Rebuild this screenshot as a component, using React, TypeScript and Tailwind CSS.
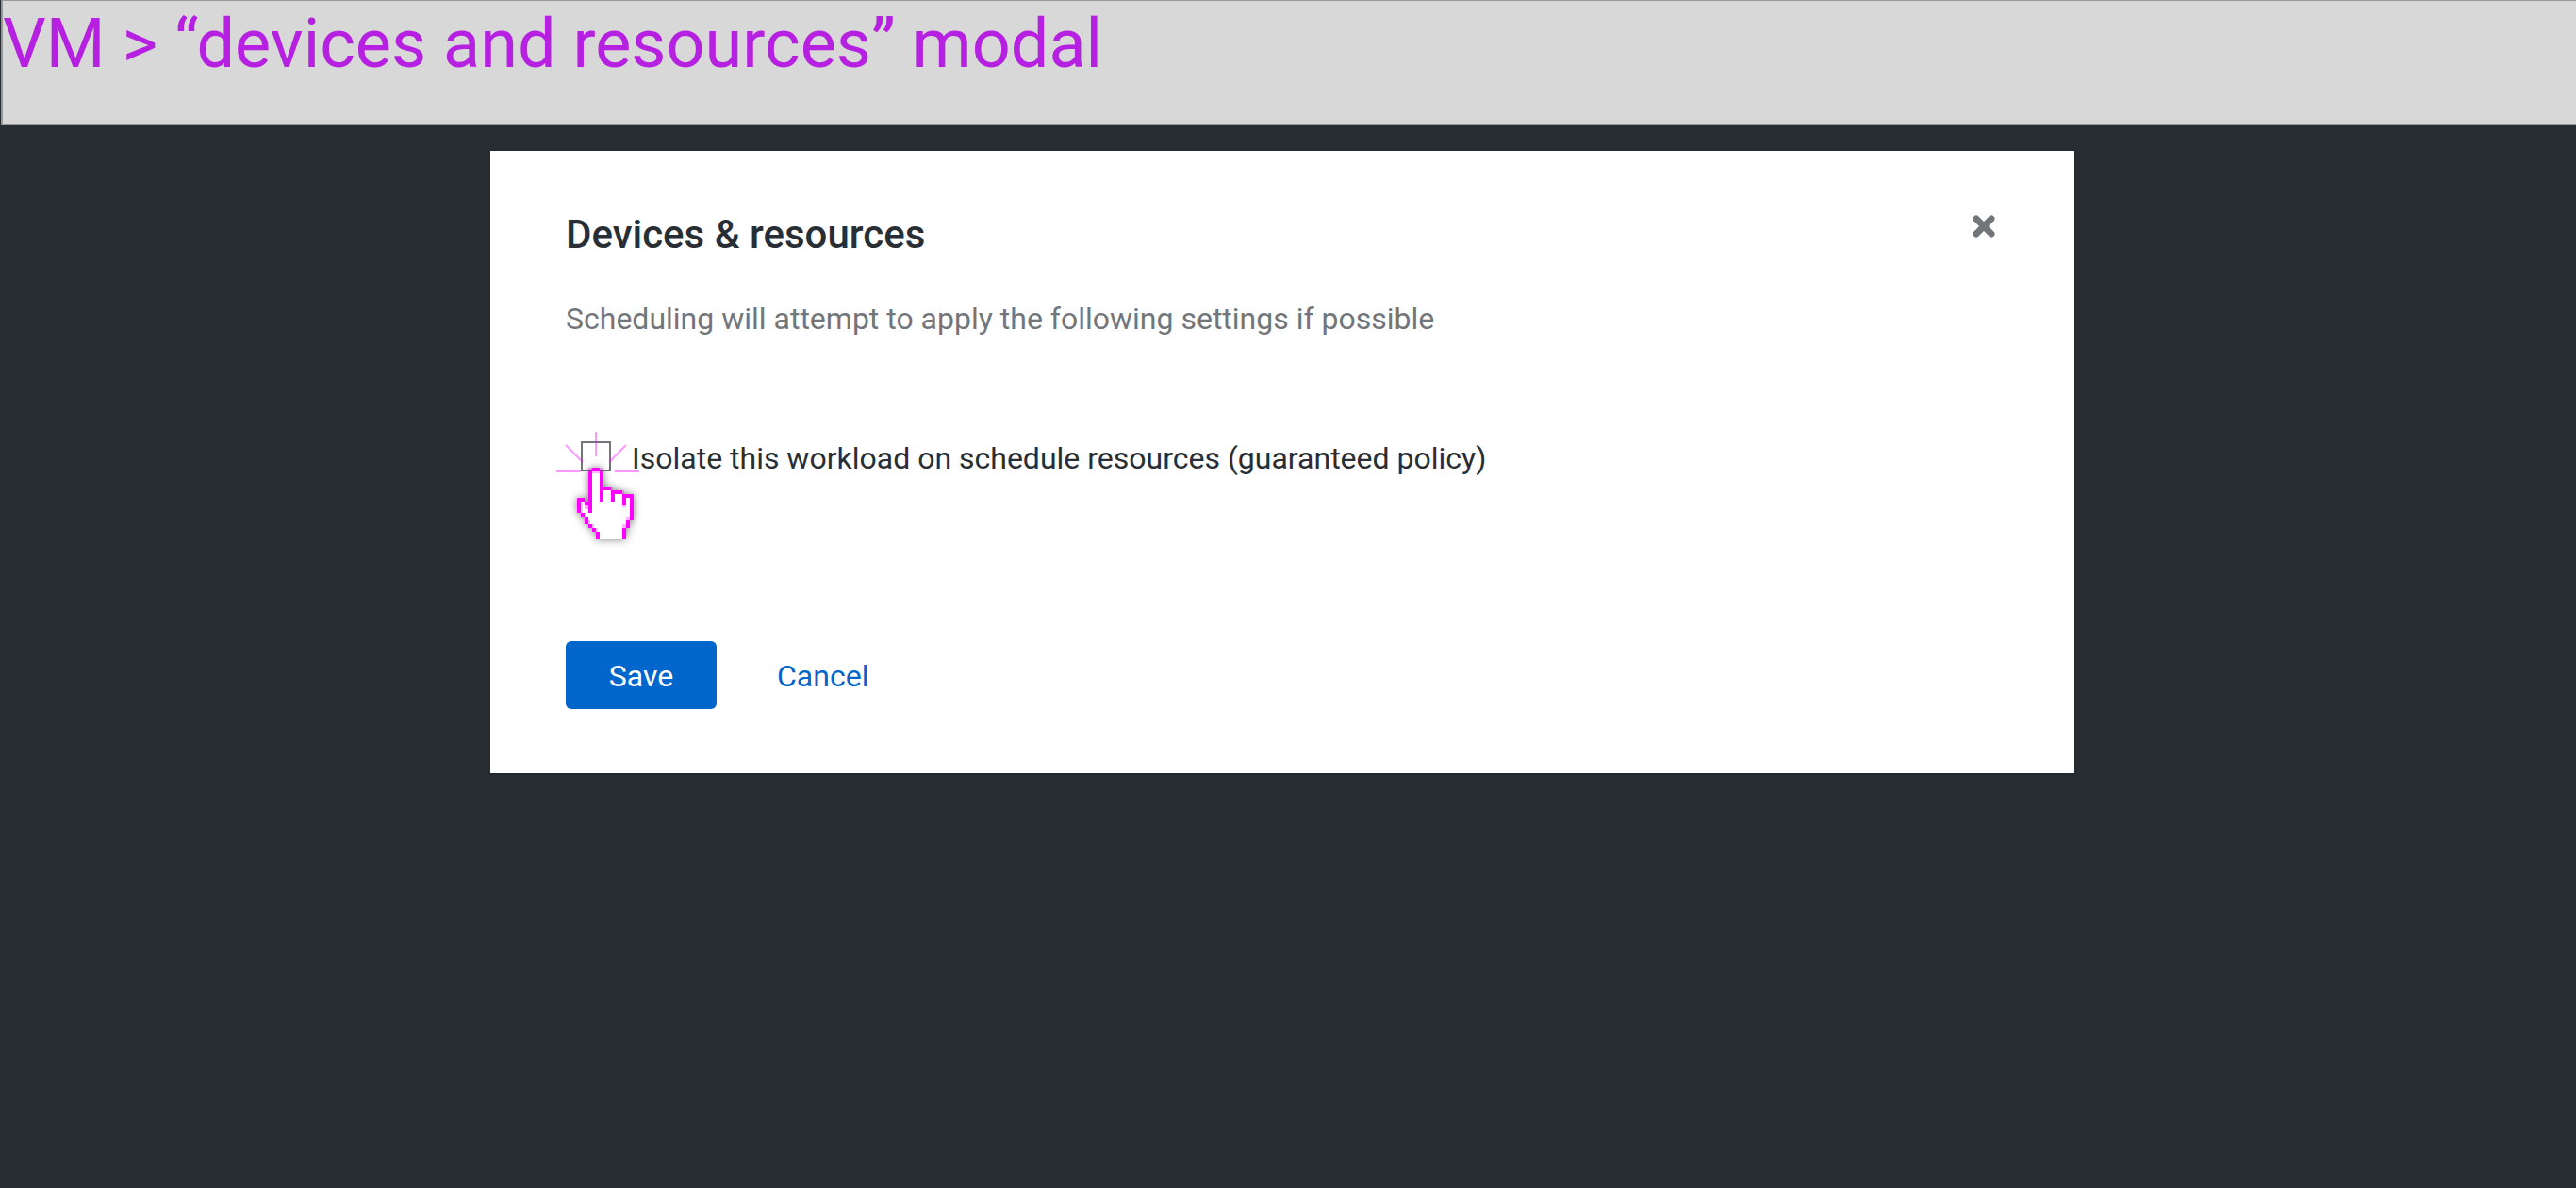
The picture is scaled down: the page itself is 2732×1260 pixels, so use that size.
import React from "react";

const handCells: [number, number, number, number][] = [
  [4, 0, 2, 1],
  [3, 1, 1, 11],
  [6, 1, 1, 8],
  [7, 5, 2, 1],
  [9, 6, 1, 3],
  [10, 6, 2, 1],
  [12, 7, 1, 3],
  [13, 7, 2, 1],
  [14, 7, 1, 7],
  [13, 14, 1, 2],
  [12, 16, 1, 3],
  [0, 8, 2, 1],
  [0, 8, 1, 4],
  [2, 9, 1, 1],
  [1, 12, 1, 1],
  [2, 13, 1, 2],
  [3, 15, 1, 1],
  [4, 16, 1, 1],
  [5, 17, 1, 2],
];

const softCells: [number, number, number, number][] = [
  [3, 0, 1, 1],
  [6, 0, 1, 1],
  [4, 1, 2, 0.5],
  [9, 5, 0.5, 1],
  [12, 6, 0.5, 1],
  [12, 10, 1, 0.5],
  [1, 9, 0.5, 3],
  [2, 8, 0.5, 1],
  [2, 10, 1, 1],
  [2, 12, 0.5, 1],
  [3, 14, 0.5, 1],
  [4, 15, 0.5, 1],
  [5, 16, 0.5, 1],
  [13, 13, 1, 1],
  [12, 15, 1, 1],
];

function ClickMarker() {
  return (
    <svg
      aria-hidden="true"
      className="pointer-events-none absolute -left-[26px] -top-[10px] overflow-visible"
      width="96"
      height="124"
      viewBox="590 458 96 124"
    >
      <g stroke="#ff00ff" strokeOpacity="0.4" strokeWidth="2">
        <path d="M590 500H616M652 500H678M632 458V484M600 472L618 490M664 472L646 490" />
      </g>
      <g transform="translate(612 496) scale(4)" style={{ filter: "drop-shadow(0.5px 0.5px 1px rgba(0,0,0,0.5))" }}>
        <path
          fill="#fff"
          d="M4 0H6V5H9V6H12V7H15V14H14V16H13V19H5V17H4V16H3V15H2V13H1V12H0V8H2V9H3V1H4Z"
        />
        <g fill="#ff00ff" fillOpacity="0.3" shapeRendering="crispEdges">
          {softCells.map(([x, y, w, h], i) => (
            <rect key={i} x={x} y={y} width={w} height={h} />
          ))}
        </g>
        <g fill="#ff00ff" shapeRendering="crispEdges">
          {handCells.map(([x, y, w, h], i) => (
            <rect key={i} x={x} y={y} width={w} height={h} />
          ))}
        </g>
      </g>
    </svg>
  );
}

export default function App() {
  return (
    <div className="min-h-screen bg-[#282d34] font-['Roboto','Liberation_Sans',sans-serif] text-[32px] leading-[48px] text-[#292e34]">
      <header className="ml-px border-t border-b-2 border-l-2 border-[#979797] bg-[#d8d8d8] pb-[38px]">
        <h1 className="text-[72px] leading-[92px] text-[#b620e0]">VM &gt; “devices and resources” modal</h1>
      </header>
      <main className="pt-[27px] pr-[532px] pl-[520px]">
        <section role="dialog" aria-labelledby="dialog-title" className="bg-white px-20 pt-16 pb-[68px] shadow-sm">
          <div className="flex items-start justify-between">
            <h2 id="dialog-title" className="text-[42px] leading-[50px] font-medium">Devices &amp; resources</h2>
            <button type="button" aria-label="Close" className="p-1">
              <svg width="24" height="24" viewBox="0 0 24 24" stroke="#72767b" strokeWidth="7" strokeLinecap="round">
                <path d="M4 4L20 20M20 4L4 20" />
              </svg>
            </button>
          </div>
          <p className="mt-10 text-[#72767b]">Scheduling will attempt to apply the following settings if possible</p>
          <label className="mt-[98px] flex items-center gap-[22px] pl-4">
            <span className="relative flex">
              <input type="checkbox" className="size-8 appearance-none border-2 border-[#72767b] bg-white" />
              <ClickMarker />
            </span>
            <span className="pt-0.5 -mb-0.5">Isolate this workload on schedule resources (guaranteed policy)</span>
          </label>
          <div className="mt-[172px] flex">
            <button type="button" className="w-40 rounded-md bg-[#0066cc] pt-[13px] pb-[11px] text-white">Save</button>
            <button type="button" className="ml-8 px-8 pt-[13px] pb-[11px] text-[#0066cc]">Cancel</button>
          </div>
        </section>
      </main>
    </div>
  );
}
